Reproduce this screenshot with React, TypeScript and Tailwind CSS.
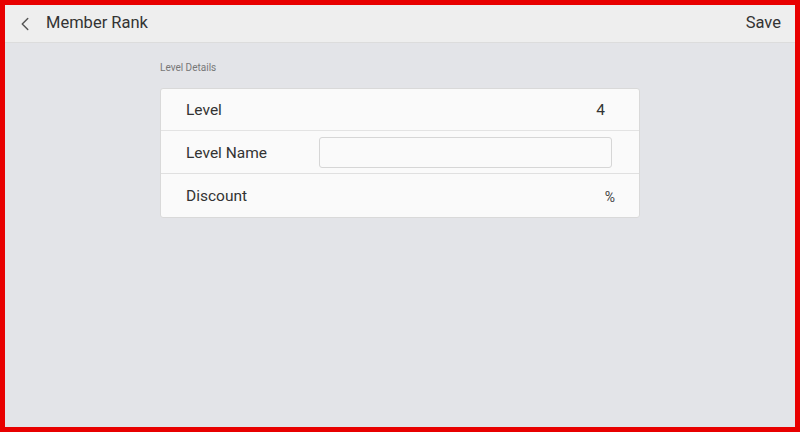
import { ChevronLeft } from "lucide-react";

const filas = ["Level", "Level Name", "Discount"];

export default function App() {
  return (
    <div className="flex h-[432px] w-[800px] flex-col border-[5px] border-[#e80000] bg-[#e3e4e8] font-['Roboto',sans-serif]">
      <header className="flex h-[38px] shrink-0 items-center justify-between border-b border-[#dcdcdc] bg-[#eeeeee] pl-[9px] pr-[14px]">
        <div className="flex items-center">
          <ChevronLeft className="h-[22px] w-[22px] text-[#555]" strokeWidth={1.6} />
          <span className="ml-[10px] text-[16.5px] text-[#333]">Member Rank</span>
        </div>
        <button className="text-[16.5px] text-[#333]">Save</button>
      </header>

      <main className="flex flex-col pl-[155px] pt-[17px]">
        <p className="text-[10px] text-[#777]">Level Details</p>
        <div className="mt-[13px] w-[480px] overflow-hidden rounded-[3px] border border-[#d9d9d9] bg-[#fafafa]">
          <div className="flex h-[42px] items-center justify-between border-b border-[#e3e3e3] pl-[25px] pr-[34px] pt-[3px]">
            <span className="text-[15.5px] text-[#333]">{filas[0]}</span>
            <span className="text-[15.5px] text-[#333]">4</span>
          </div>
          <div className="flex h-[43px] items-center border-b border-[#e0e0e0] pl-[25px]">
            <span className="mt-[3px] w-[133px] text-[15.5px] text-[#333]">{filas[1]}</span>
            <input className="h-[31px] w-[293px] rounded-[3px] border border-[#d6d6d6] bg-[#fafafa] outline-none" />
          </div>
          <div className="flex h-[43px] items-center justify-between pl-[25px] pr-[24px] pt-[3px]">
            <span className="text-[15.5px] text-[#333]">{filas[2]}</span>
            <span className="text-[14px] text-[#444]">%</span>
          </div>
        </div>
      </main>
    </div>
  );
}
